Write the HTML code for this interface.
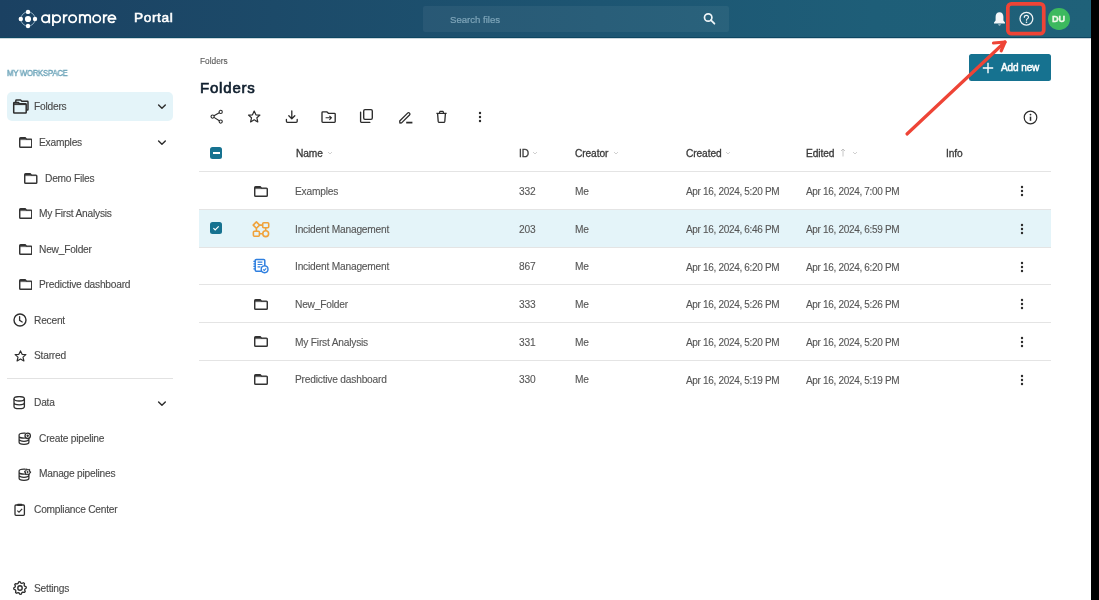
<!DOCTYPE html>
<html><head><meta charset="utf-8"><style>
html,body{margin:0;padding:0;width:1099px;height:600px;overflow:hidden;background:#fff;}
body{position:relative;font-family:"Liberation Sans", sans-serif;}
.t{position:absolute;white-space:nowrap;-webkit-font-smoothing:antialiased;will-change:transform;}
.r{position:absolute;display:block;}
</style></head><body>
<div class="r" style="left:0px;top:0px;width:1091px;height:37.5px;background:linear-gradient(90deg,#1b4162 0%,#1c4a69 25%,#1d5572 55%,#1e5e78 80%,#1f6179 100%);"></div>
<div class="r" style="left:0px;top:37px;width:1091px;height:1px;background:#0d4661;"></div>
<div class="r" style="left:0px;top:38px;width:1091px;height:1px;background:rgba(20,75,100,0.22);"></div>
<div class="r" style="left:423px;top:6px;width:306px;height:26px;background:rgba(255,255,255,0.055);border-radius:2px;"></div>
<div class="t" style="left:450px;top:15.17px;font-size:9.6px;line-height:9.6px;font-weight:400;color:#7ea5b9;letter-spacing:0px;-webkit-text-stroke:0.2px #7ea5b9;">Search files</div>
<svg class="r" style="left:702px;top:12px;" width="15" height="14" viewBox="0 0 15 14"><circle cx="6.2" cy="5.5" r="3.7" fill="none" stroke="#eef4f7" stroke-width="1.7"/><path d="M8.9 8.2 L12.4 11.7" stroke="#eef4f7" stroke-width="1.8" stroke-linecap="round"/></svg>
<svg class="r" style="left:17px;top:9px;" width="22" height="22" viewBox="0 0 22 22"><circle cx="11" cy="10" r="7.1" fill="none" stroke="#a9c6d8" stroke-width="0.8"/><circle cx="11" cy="10" r="3.1" fill="#fff"/><circle cx="11" cy="2.9" r="2.2" fill="#fff"/><circle cx="11" cy="17" r="2.2" fill="#fff"/><circle cx="3.8" cy="10" r="2.2" fill="#fff"/><circle cx="18" cy="10" r="2.2" fill="#fff"/></svg>
<svg class="r" style="left:38px;top:8px;" width="82" height="22" viewBox="0 0 82 22"><g fill="none" stroke="#fff" stroke-width="1.8"><circle cx="7.55" cy="10.7" r="3.65"/><path d="M11.25 6.3 L11.25 15.3"/><path d="M14.95 6.3 L14.95 18"/><circle cx="18.65" cy="10.7" r="3.65"/><path d="M25.75 6.3 L25.75 15.3 M25.75 10.6 C25.75 8.2 27.3 7.05 29.5 7.05"/><circle cx="34.6" cy="10.7" r="3.65"/><path d="M41.75 6.3 L41.75 15.3 M41.75 9.5 A2.625 2.625 0 0 1 47 9.5 L47 15.3 M47 9.5 A2.625 2.625 0 0 1 52.25 9.5 L52.25 15.3"/><circle cx="58.7" cy="10.7" r="3.65"/><path d="M65.75 6.3 L65.75 15.3 M65.75 10.6 C65.75 8.2 67.3 7.05 69.4 7.05"/><path d="M70.3 10.75 L77.5 10.75 A3.65 3.65 0 1 0 76.6 13.2"/></g></svg>
<div class="t" style="left:134.2px;top:11.30px;font-size:13.7px;line-height:13.7px;font-weight:400;color:#ffffff;letter-spacing:0.6px;-webkit-text-stroke:0.55px #ffffff;">Portal</div>
<svg class="r" style="left:993px;top:11px;" width="13" height="16" viewBox="0 0 13 16"><path d="M6.5 1.2 C4 1.2 2.6 3.3 2.6 5.8 L2.6 9.6 L1 11.6 L1 12.6 L12 12.6 L12 11.6 L10.4 9.6 L10.4 5.8 C10.4 3.3 9 1.2 6.5 1.2 Z" fill="#f4f7f9"/><path d="M5 13.4 Q6.5 15.6 8 13.4 Z" fill="#f4f7f9"/></svg>
<svg class="r" style="left:1018px;top:11px;" width="17" height="17" viewBox="0 0 17 17"><circle cx="8.4" cy="7.8" r="6.4" fill="none" stroke="#eef3f6" stroke-width="1.3"/><path d="M6.3 6.3 C6.3 4.9 7.3 4.3 8.4 4.3 C9.6 4.3 10.5 5 10.5 6.2 C10.5 7.6 8.5 7.7 8.5 9.2" fill="none" stroke="#eef3f6" stroke-width="1.2" stroke-linecap="round"/><circle cx="8.5" cy="11.2" r="0.8" fill="#eef3f6"/></svg>
<div class="r" style="left:1048px;top:8.1px;width:21.5px;height:21.5px;background:#3cb95e;border-radius:50%;"></div>
<div class="t" style="left:1051.6px;top:14.51px;font-size:9.2px;line-height:9.2px;font-weight:700;color:#eef8e8;letter-spacing:-0.25px;-webkit-text-stroke:0.3px #eef8e8;">DU</div>
<div class="t" style="left:7.3px;top:68.62px;font-size:8.6px;line-height:8.6px;font-weight:400;color:#6ea5ba;letter-spacing:-0.25px;transform:scaleX(0.9);transform-origin:0 0;-webkit-text-stroke:0.4px #6ea5ba;">MY WORKSPACE</div>
<div class="r" style="left:7px;top:91.5px;width:165.5px;height:29.3px;background:#e4f4f9;border-radius:5px;"></div>
<svg class="r" style="left:12px;top:98.5px;" width="18" height="15" viewBox="0 0 18 15"><path d="M3.8 3.2 L3.8 1.7 Q3.8 1 4.5 1 L8.6 1 L9.8 2.2 L15.3 2.2 Q16 2.2 16 2.9 L16 10.4 Q16 11 15.4 11 L14.4 11" fill="none" stroke="#2e2e2e" stroke-width="1.45" stroke-linejoin="round"/><path d="M1.7 4.3 Q1.7 3.6 2.4 3.6 L6.4 3.6 L7.6 4.8 L13.5 4.8 Q14.2 4.8 14.2 5.5 L14.2 13.4 Q14.2 14 13.6 14 L2.3 14 Q1.7 14 1.7 13.4 Z" fill="none" stroke="#2e2e2e" stroke-width="1.5" stroke-linejoin="round"/><path d="M1.7 3.6 L6.4 3.6 L7.6 4.8 L1.7 4.8Z" fill="#2e2e2e"/><path d="M1.7 5.6 L14.2 5.6" stroke="#2e2e2e" stroke-width="1"/></svg>
<div class="t" style="left:33.9px;top:102.37px;font-size:10.2px;line-height:10.2px;font-weight:400;color:#4a4a4a;letter-spacing:-0.22px;-webkit-text-stroke:0.12px #4a4a4a;">Folders</div>
<svg class="r" style="left:157px;top:103.3px;" width="10" height="7" viewBox="0 0 10 7"><path d="M1.6 1.9 L4.95 5.2 L8.3 1.9" fill="none" stroke="#2e2e2e" stroke-width="1.45" stroke-linecap="round" stroke-linejoin="round"/></svg>
<svg class="r" style="left:18.8px;top:137px;" width="13.5" height="11" viewBox="0 0 13.5 11"><path d="M0.725 1.625 Q0.725 0.725 1.625 0.725 L6.2 0.725 L7.5 2.125 L11.875 2.125 Q12.775 2.125 12.775 3.025 L12.775 9.375 Q12.775 10.275 11.875 10.275 L1.625 10.275 Q0.725 10.275 0.725 9.375 Z" fill="none" stroke="#333333" stroke-width="1.45" stroke-linejoin="round"/><path d="M0.725 0.725 L6.2 0.725 L7.5 2.125 L0.725 2.325Z" fill="#333333"/><path d="M0.725 2.625 L12.775 2.625" stroke="#333333" stroke-width="0.7"/></svg>
<div class="t" style="left:39.4px;top:138.47px;font-size:10.2px;line-height:10.2px;font-weight:400;color:#4a4a4a;letter-spacing:-0.22px;-webkit-text-stroke:0.12px #4a4a4a;">Examples</div>
<svg class="r" style="left:157px;top:139.3px;" width="10" height="7" viewBox="0 0 10 7"><path d="M1.6 1.9 L4.95 5.2 L8.3 1.9" fill="none" stroke="#2e2e2e" stroke-width="1.45" stroke-linecap="round" stroke-linejoin="round"/></svg>
<svg class="r" style="left:24.3px;top:172.5px;" width="13.5" height="11" viewBox="0 0 13.5 11"><path d="M0.725 1.625 Q0.725 0.725 1.625 0.725 L6.2 0.725 L7.5 2.125 L11.875 2.125 Q12.775 2.125 12.775 3.025 L12.775 9.375 Q12.775 10.275 11.875 10.275 L1.625 10.275 Q0.725 10.275 0.725 9.375 Z" fill="none" stroke="#333333" stroke-width="1.45" stroke-linejoin="round"/><path d="M0.725 0.725 L6.2 0.725 L7.5 2.125 L0.725 2.325Z" fill="#333333"/><path d="M0.725 2.625 L12.775 2.625" stroke="#333333" stroke-width="0.7"/></svg>
<div class="t" style="left:44.8px;top:173.77px;font-size:10.2px;line-height:10.2px;font-weight:400;color:#4a4a4a;letter-spacing:-0.22px;-webkit-text-stroke:0.12px #4a4a4a;">Demo Files</div>
<svg class="r" style="left:18.8px;top:208px;" width="13.5" height="11" viewBox="0 0 13.5 11"><path d="M0.725 1.625 Q0.725 0.725 1.625 0.725 L6.2 0.725 L7.5 2.125 L11.875 2.125 Q12.775 2.125 12.775 3.025 L12.775 9.375 Q12.775 10.275 11.875 10.275 L1.625 10.275 Q0.725 10.275 0.725 9.375 Z" fill="none" stroke="#333333" stroke-width="1.45" stroke-linejoin="round"/><path d="M0.725 0.725 L6.2 0.725 L7.5 2.125 L0.725 2.325Z" fill="#333333"/><path d="M0.725 2.625 L12.775 2.625" stroke="#333333" stroke-width="0.7"/></svg>
<div class="t" style="left:39.4px;top:209.17px;font-size:10.2px;line-height:10.2px;font-weight:400;color:#4a4a4a;letter-spacing:-0.22px;-webkit-text-stroke:0.12px #4a4a4a;">My First Analysis</div>
<svg class="r" style="left:18.8px;top:243.7px;" width="13.5" height="11" viewBox="0 0 13.5 11"><path d="M0.725 1.625 Q0.725 0.725 1.625 0.725 L6.2 0.725 L7.5 2.125 L11.875 2.125 Q12.775 2.125 12.775 3.025 L12.775 9.375 Q12.775 10.275 11.875 10.275 L1.625 10.275 Q0.725 10.275 0.725 9.375 Z" fill="none" stroke="#333333" stroke-width="1.45" stroke-linejoin="round"/><path d="M0.725 0.725 L6.2 0.725 L7.5 2.125 L0.725 2.325Z" fill="#333333"/><path d="M0.725 2.625 L12.775 2.625" stroke="#333333" stroke-width="0.7"/></svg>
<div class="t" style="left:39.4px;top:244.67px;font-size:10.2px;line-height:10.2px;font-weight:400;color:#4a4a4a;letter-spacing:-0.22px;-webkit-text-stroke:0.12px #4a4a4a;">New_Folder</div>
<svg class="r" style="left:18.8px;top:279.3px;" width="13.5" height="11" viewBox="0 0 13.5 11"><path d="M0.725 1.625 Q0.725 0.725 1.625 0.725 L6.2 0.725 L7.5 2.125 L11.875 2.125 Q12.775 2.125 12.775 3.025 L12.775 9.375 Q12.775 10.275 11.875 10.275 L1.625 10.275 Q0.725 10.275 0.725 9.375 Z" fill="none" stroke="#333333" stroke-width="1.45" stroke-linejoin="round"/><path d="M0.725 0.725 L6.2 0.725 L7.5 2.125 L0.725 2.325Z" fill="#333333"/><path d="M0.725 2.625 L12.775 2.625" stroke="#333333" stroke-width="0.7"/></svg>
<div class="t" style="left:39.4px;top:279.97px;font-size:10.2px;line-height:10.2px;font-weight:400;color:#4a4a4a;letter-spacing:-0.22px;-webkit-text-stroke:0.12px #4a4a4a;">Predictive dashboard</div>
<svg class="r" style="left:13px;top:313px;" width="14" height="14" viewBox="0 0 14 14"><circle cx="7" cy="7" r="6" fill="none" stroke="#2e2e2e" stroke-width="1.4"/><path d="M6.6 3.6 L6.6 7.3 L9.2 9" fill="none" stroke="#2e2e2e" stroke-width="1.3" stroke-linecap="round"/></svg>
<div class="t" style="left:33.9px;top:315.97px;font-size:10.2px;line-height:10.2px;font-weight:400;color:#4a4a4a;letter-spacing:-0.22px;-webkit-text-stroke:0.12px #4a4a4a;">Recent</div>
<svg class="r" style="left:13.5px;top:350px;" width="14" height="12" viewBox="0 0 14 12"><path d="M6.5 0.9 L8.1 4.3 L11.9 4.6 L9 7.1 L9.9 10.9 L6.5 8.9 L3.1 10.9 L4 7.1 L1.1 4.6 L4.9 4.3 Z" fill="none" stroke="#2e2e2e" stroke-width="1.2" stroke-linejoin="round"/></svg>
<div class="t" style="left:33.9px;top:351.37px;font-size:10.2px;line-height:10.2px;font-weight:400;color:#4a4a4a;letter-spacing:-0.22px;-webkit-text-stroke:0.12px #4a4a4a;">Starred</div>
<div class="r" style="left:7px;top:378px;width:166px;height:1px;background:#e2e2e2;"></div>
<svg class="r" style="left:12.5px;top:396px;" width="13" height="13.5" viewBox="0 0 13 13.5"><ellipse cx="6.2" cy="2.8" rx="5.2" ry="2.2" fill="none" stroke="#2e2e2e" stroke-width="1.3"/><path d="M1 2.8 L1 10.4 C1 11.8 3.3 12.7 6.2 12.7 C9.1 12.7 11.4 11.8 11.4 10.4 L11.4 2.8 M1 6.6 C1 8 3.3 8.9 6.2 8.9 C9.1 8.9 11.4 8 11.4 6.6" fill="none" stroke="#2e2e2e" stroke-width="1.3"/></svg>
<div class="t" style="left:33.9px;top:398.17px;font-size:10.2px;line-height:10.2px;font-weight:400;color:#4a4a4a;letter-spacing:-0.22px;-webkit-text-stroke:0.12px #4a4a4a;">Data</div>
<svg class="r" style="left:157px;top:399.5px;" width="10" height="7" viewBox="0 0 10 7"><path d="M1.6 1.9 L4.95 5.2 L8.3 1.9" fill="none" stroke="#2e2e2e" stroke-width="1.45" stroke-linecap="round" stroke-linejoin="round"/></svg>
<svg class="r" style="left:18.2px;top:432px;" width="14" height="13" viewBox="0 0 14 13"><path d="M7.2 1.1 C6.8 1.05 6.4 1 6 1 C3.1 1 1.1 1.8 1.1 3 L1.1 10.3 C1.1 11.5 3.1 12.3 6 12.3 C8.9 12.3 10.9 11.5 10.9 10.3 L10.9 6.6 M1.1 4.6 C1.6 5.6 3.4 6.1 6 6.1 C6.6 6.1 7 6.1 7.5 6 M1.1 7.6 C1.6 8.8 3.4 9.3 6 9.3 C8.6 9.3 10.4 8.8 10.9 7.6" fill="none" stroke="#2e2e2e" stroke-width="1.25" stroke-linecap="round"/><circle cx="9.7" cy="3.8" r="2.7" fill="#fff" stroke="#2e2e2e" stroke-width="1.3"/><path d="M9.7 2.5 L9.7 5.1 M8.4 3.8 L11 3.8" stroke="#2e2e2e" stroke-width="1.1"/></svg>
<div class="t" style="left:39.4px;top:434.17px;font-size:10.2px;line-height:10.2px;font-weight:400;color:#4a4a4a;letter-spacing:-0.22px;-webkit-text-stroke:0.12px #4a4a4a;">Create pipeline</div>
<svg class="r" style="left:18.2px;top:467.5px;" width="14" height="13" viewBox="0 0 14 13"><path d="M7.2 1.1 C6.8 1.05 6.4 1 6 1 C3.1 1 1.1 1.8 1.1 3 L1.1 10.3 C1.1 11.5 3.1 12.3 6 12.3 C8.9 12.3 10.9 11.5 10.9 10.3 L10.9 6.6 M1.1 4.6 C1.6 5.6 3.4 6.1 6 6.1 C6.6 6.1 7 6.1 7.5 6 M1.1 7.6 C1.6 8.8 3.4 9.3 6 9.3 C8.6 9.3 10.4 8.8 10.9 7.6" fill="none" stroke="#2e2e2e" stroke-width="1.25" stroke-linecap="round"/><path d="M12.60 4.00 L12.50 4.78 L11.51 5.10 L11.16 5.56 L11.10 6.60 L10.38 6.90 L9.60 6.20 L9.03 6.13 L8.10 6.60 L7.48 6.12 L7.69 5.10 L7.47 4.57 L6.60 4.00 L6.70 3.22 L7.69 2.90 L8.04 2.44 L8.10 1.40 L8.82 1.10 L9.60 1.80 L10.17 1.87 L11.10 1.40 L11.72 1.88 L11.51 2.90 L11.73 3.43Z" fill="#fff" stroke="#2e2e2e" stroke-width="1.1" stroke-linejoin="round"/><circle cx="9.6" cy="4" r="0.9" fill="#2e2e2e"/></svg>
<div class="t" style="left:39.4px;top:469.27px;font-size:10.2px;line-height:10.2px;font-weight:400;color:#4a4a4a;letter-spacing:-0.22px;-webkit-text-stroke:0.12px #4a4a4a;">Manage pipelines</div>
<svg class="r" style="left:14px;top:503px;" width="11.5" height="13" viewBox="0 0 11.5 13"><rect x="1" y="2" width="9.4" height="10.3" rx="1" fill="none" stroke="#2e2e2e" stroke-width="1.3"/><rect x="3.3" y="0.7" width="4.8" height="2.4" rx="0.5" fill="#2e2e2e"/><path d="M3.3 7.6 L5 9.2 L8.2 5.8" fill="none" stroke="#2e2e2e" stroke-width="1.1"/></svg>
<div class="t" style="left:33.9px;top:504.67px;font-size:10.2px;line-height:10.2px;font-weight:400;color:#4a4a4a;letter-spacing:-0.22px;-webkit-text-stroke:0.12px #4a4a4a;">Compliance Center</div>
<svg class="r" style="left:13px;top:581.3px;" width="14" height="14" viewBox="0 0 14 14"><path d="M13.17 5.75 L13.30 6.98 L11.91 7.96 L11.63 8.90 L12.25 10.48 L11.47 11.44 L9.79 11.15 L8.93 11.61 L8.25 13.17 L7.02 13.30 L6.04 11.91 L5.10 11.63 L3.52 12.25 L2.56 11.47 L2.85 9.79 L2.39 8.93 L0.83 8.25 L0.70 7.02 L2.09 6.04 L2.37 5.10 L1.75 3.52 L2.53 2.56 L4.21 2.85 L5.07 2.39 L5.75 0.83 L6.98 0.70 L7.96 2.09 L8.90 2.37 L10.48 1.75 L11.44 2.53 L11.15 4.21 L11.61 5.07Z" fill="none" stroke="#2e2e2e" stroke-width="1.3" stroke-linejoin="round"/><circle cx="7" cy="7" r="2.2" fill="none" stroke="#2e2e2e" stroke-width="1.4"/></svg>
<div class="t" style="left:33.9px;top:583.97px;font-size:10.2px;line-height:10.2px;font-weight:400;color:#4a4a4a;letter-spacing:-0.22px;-webkit-text-stroke:0.12px #4a4a4a;">Settings</div>
<div class="t" style="left:199.8px;top:56.97px;font-size:8.3px;line-height:8.3px;font-weight:400;color:#5a5a5a;letter-spacing:0px;-webkit-text-stroke:0.12px #5a5a5a;">Folders</div>
<div class="t" style="left:200.2px;top:80.00px;font-size:15.0px;line-height:15.0px;font-weight:400;color:#0f1e2d;letter-spacing:0.8px;-webkit-text-stroke:0.65px #0f1e2d;">Folders</div>
<svg class="r" style="left:210px;top:109px;" width="14" height="15" viewBox="0 0 14 15"><circle cx="2.6" cy="7.6" r="1.6" fill="none" stroke="#2b2b2b" stroke-width="1.1"/><circle cx="10.7" cy="2.9" r="1.6" fill="none" stroke="#2b2b2b" stroke-width="1.1"/><circle cx="10.7" cy="12.6" r="1.6" fill="none" stroke="#2b2b2b" stroke-width="1.1"/><path d="M4 6.8 L9.3 3.7 M4 8.4 L9.3 11.8" stroke="#2b2b2b" stroke-width="1.1"/></svg>
<svg class="r" style="left:247px;top:110px;" width="14" height="13.5" viewBox="0 0 14 13.5"><path d="M7.2 1 L8.9 4.8 L12.9 5.1 L9.9 7.8 L10.8 11.9 L7.2 9.8 L3.6 11.9 L4.5 7.8 L1.5 5.1 L5.5 4.8 Z" fill="none" stroke="#2b2b2b" stroke-width="1.2" stroke-linejoin="round"/></svg>
<svg class="r" style="left:285px;top:110px;" width="14" height="14" viewBox="0 0 14 14"><path d="M6.8 1 L6.8 8.6 M3.8 5.8 L6.8 8.8 L9.8 5.8" fill="none" stroke="#2b2b2b" stroke-width="1.3" stroke-linecap="round" stroke-linejoin="round"/><path d="M1.4 9.5 L1.4 11.2 C1.4 11.9 1.8 12.3 2.5 12.3 L11.1 12.3 C11.8 12.3 12.2 11.9 12.2 11.2 L12.2 9.5" fill="none" stroke="#2b2b2b" stroke-width="1.3" stroke-linecap="round"/></svg>
<svg class="r" style="left:321px;top:110px;" width="16" height="14" viewBox="0 0 16 14"><path d="M1.8 1.9 L6 1.9 L7.4 3.3 L13.4 3.3 C14 3.3 14.2 3.6 14.2 4.1 L14.2 11.6 C14.2 12.1 14 12.4 13.4 12.4 L1.8 12.4 C1.2 12.4 1 12.1 1 11.6 L1 2.7 C1 2.2 1.2 1.9 1.8 1.9Z" fill="none" stroke="#2b2b2b" stroke-width="1.35" stroke-linejoin="round"/><path d="M4.6 7.8 L10.4 7.8 M8.4 5.8 L10.4 7.8 L8.4 9.8" fill="none" stroke="#2b2b2b" stroke-width="1.1"/></svg>
<svg class="r" style="left:359px;top:108px;" width="15" height="16" viewBox="0 0 15 16"><rect x="4.7" y="1.6" width="8.6" height="9.8" rx="1.3" fill="none" stroke="#2b2b2b" stroke-width="1.35"/><path d="M1.6 4.2 L1.6 13.6 C1.6 14.1 1.9 14.4 2.4 14.4 L10.8 14.4" fill="none" stroke="#2b2b2b" stroke-width="1.35" stroke-linecap="round"/></svg>
<svg class="r" style="left:398px;top:111px;" width="16" height="14" viewBox="0 0 16 14"><path d="M1.9 12 L1.7 10 L9.6 2.1 C10.2 1.5 10.9 1.5 11.5 2.1 C12.1 2.7 12.1 3.4 11.5 4 L3.6 11.9 Z" fill="none" stroke="#2b2b2b" stroke-width="1.3" stroke-linejoin="round"/><path d="M8.2 11.6 L14.4 11.6" stroke="#2b2b2b" stroke-width="1.75"/></svg>
<svg class="r" style="left:435px;top:110px;" width="13" height="14" viewBox="0 0 13 14"><path d="M1.4 3.3 L11.6 3.3 M4.4 3.1 L4.9 1.4 L8.1 1.4 L8.6 3.1" fill="none" stroke="#2b2b2b" stroke-width="1.2" stroke-linejoin="round"/><path d="M2.6 3.6 L3.2 11.4 C3.3 12.1 3.7 12.4 4.3 12.4 L8.7 12.4 C9.3 12.4 9.7 12.1 9.8 11.4 L10.4 3.6" fill="none" stroke="#2b2b2b" stroke-width="1.3"/></svg>
<svg class="r" style="left:476.5px;top:111px;" width="6" height="13" viewBox="0 0 6 13"><circle cx="3" cy="2.00" r="1.2" fill="#2b2b2b"/><circle cx="3" cy="6.00" r="1.2" fill="#2b2b2b"/><circle cx="3" cy="10.00" r="1.2" fill="#2b2b2b"/></svg>
<svg class="r" style="left:1023px;top:109.5px;" width="15" height="15" viewBox="0 0 15 15"><circle cx="7.5" cy="7.5" r="6.3" fill="none" stroke="#2b2b2b" stroke-width="1.2"/><circle cx="7.5" cy="4.6" r="0.9" fill="#2b2b2b"/><path d="M7.5 6.6 L7.5 10.8" stroke="#2b2b2b" stroke-width="1.5"/></svg>
<div class="r" style="left:969px;top:54.3px;width:82px;height:26.8px;background:#167290;border-radius:2.5px;"></div>
<svg class="r" style="left:981.5px;top:62px;" width="12" height="12" viewBox="0 0 12 12"><path d="M6 0.8 L6 11.2 M0.8 6 L11.2 6" stroke="#fff" stroke-width="1.4"/></svg>
<div class="t" style="left:1001.2px;top:63.33px;font-size:10.0px;line-height:10.0px;font-weight:400;color:#ffffff;letter-spacing:-0.1px;-webkit-text-stroke:0.45px #ffffff;">Add new</div>
<div class="r" style="left:210px;top:147px;width:12px;height:12px;background:#167290;border-radius:2.5px;"></div>
<div class="r" style="left:212.5px;top:152.1px;width:7.2px;height:1.8px;background:#ffffff;"></div>
<div class="t" style="left:295.5px;top:149.07px;font-size:10.2px;line-height:10.2px;font-weight:400;color:#3a3a3a;letter-spacing:-0.1px;-webkit-text-stroke:0.3px #3a3a3a;">Name</div>
<svg class="r" style="left:326.5px;top:151px;" width="6" height="4" viewBox="0 0 6 4"><path d="M1 1 L3 3 L5 1" fill="none" stroke="#c4c4c4" stroke-width="0.8"/></svg>
<div class="t" style="left:518.6px;top:149.07px;font-size:10.2px;line-height:10.2px;font-weight:400;color:#3a3a3a;letter-spacing:-0.1px;-webkit-text-stroke:0.3px #3a3a3a;">ID</div>
<svg class="r" style="left:531.5px;top:151px;" width="6" height="4" viewBox="0 0 6 4"><path d="M1 1 L3 3 L5 1" fill="none" stroke="#c4c4c4" stroke-width="0.8"/></svg>
<div class="t" style="left:574.5px;top:149.07px;font-size:10.2px;line-height:10.2px;font-weight:400;color:#3a3a3a;letter-spacing:-0.1px;-webkit-text-stroke:0.3px #3a3a3a;">Creator</div>
<svg class="r" style="left:612.5px;top:151px;" width="6" height="4" viewBox="0 0 6 4"><path d="M1 1 L3 3 L5 1" fill="none" stroke="#c4c4c4" stroke-width="0.8"/></svg>
<div class="t" style="left:685.8px;top:149.07px;font-size:10.2px;line-height:10.2px;font-weight:400;color:#3a3a3a;letter-spacing:-0.1px;-webkit-text-stroke:0.3px #3a3a3a;">Created</div>
<svg class="r" style="left:724.5px;top:151px;" width="6" height="4" viewBox="0 0 6 4"><path d="M1 1 L3 3 L5 1" fill="none" stroke="#c4c4c4" stroke-width="0.8"/></svg>
<div class="t" style="left:806.4px;top:149.07px;font-size:10.2px;line-height:10.2px;font-weight:400;color:#3a3a3a;letter-spacing:-0.1px;-webkit-text-stroke:0.3px #3a3a3a;">Edited</div>
<svg class="r" style="left:840px;top:147.5px;" width="6" height="9" viewBox="0 0 6 9"><path d="M3 8.5 L3 1 M1 3 L3 1 L5 3" fill="none" stroke="#b8b8b8" stroke-width="0.8"/></svg>
<svg class="r" style="left:851.5px;top:151px;" width="6" height="4" viewBox="0 0 6 4"><path d="M1 1 L3 3 L5 1" fill="none" stroke="#c4c4c4" stroke-width="0.8"/></svg>
<div class="t" style="left:946px;top:149.07px;font-size:10.2px;line-height:10.2px;font-weight:400;color:#3a3a3a;letter-spacing:-0.1px;-webkit-text-stroke:0.3px #3a3a3a;">Info</div>
<div class="r" style="left:199px;top:209.3px;width:852px;height:37.8px;background:#e4f4f9;"></div>
<div class="r" style="left:199px;top:171.2px;width:852px;height:1px;background:#e4e4e4;"></div>
<div class="r" style="left:199px;top:209.0px;width:852px;height:1px;background:#e4e4e4;"></div>
<div class="r" style="left:199px;top:246.8px;width:852px;height:1px;background:#e4e4e4;"></div>
<div class="r" style="left:199px;top:284.4px;width:852px;height:1px;background:#e4e4e4;"></div>
<div class="r" style="left:199px;top:322.0px;width:852px;height:1px;background:#e4e4e4;"></div>
<div class="r" style="left:199px;top:359.7px;width:852px;height:1px;background:#e4e4e4;"></div>
<svg class="r" style="left:254px;top:185.6px;" width="14" height="11" viewBox="0 0 14 11"><path d="M0.725 1.625 Q0.725 0.725 1.625 0.725 L6.2 0.725 L7.5 2.125 L12.375 2.125 Q13.275 2.125 13.275 3.025 L13.275 9.375 Q13.275 10.275 12.375 10.275 L1.625 10.275 Q0.725 10.275 0.725 9.375 Z" fill="none" stroke="#333333" stroke-width="1.45" stroke-linejoin="round"/><path d="M0.725 0.725 L6.2 0.725 L7.5 2.125 L0.725 2.325Z" fill="#333333"/><path d="M0.725 2.625 L13.275 2.625" stroke="#333333" stroke-width="0.7"/></svg>
<div class="t" style="left:294.9px;top:186.87px;font-size:10.2px;line-height:10.2px;font-weight:400;color:#575757;letter-spacing:-0.2px;-webkit-text-stroke:0.12px #575757;">Examples</div>
<div class="t" style="left:518.6px;top:186.87px;font-size:10.2px;line-height:10.2px;font-weight:400;color:#575757;letter-spacing:-0.2px;-webkit-text-stroke:0.12px #575757;">332</div>
<div class="t" style="left:574.5px;top:186.87px;font-size:10.2px;line-height:10.2px;font-weight:400;color:#575757;letter-spacing:-0.2px;-webkit-text-stroke:0.12px #575757;">Me</div>
<div class="t" style="left:685.8px;top:187.03px;font-size:10.0px;line-height:10.0px;font-weight:400;color:#575757;letter-spacing:-0.32px;-webkit-text-stroke:0.12px #575757;">Apr 16, 2024, 5:20 PM</div>
<div class="t" style="left:806.4px;top:187.03px;font-size:10.0px;line-height:10.0px;font-weight:400;color:#575757;letter-spacing:-0.32px;-webkit-text-stroke:0.12px #575757;">Apr 16, 2024, 7:00 PM</div>
<svg class="r" style="left:1019.3px;top:185.0px;" width="6" height="13" viewBox="0 0 6 13"><circle cx="3" cy="2.00" r="1.2" fill="#2b2b2b"/><circle cx="3" cy="6.00" r="1.2" fill="#2b2b2b"/><circle cx="3" cy="10.00" r="1.2" fill="#2b2b2b"/></svg>
<svg class="r" style="left:252px;top:221.1px;" width="18" height="18" viewBox="0 0 18 18"><path d="M4.4 0.9 L7.6 4.1 L4.4 7.3 L1.2 4.1 Z" fill="none" stroke="#f0a23b" stroke-width="1.6" stroke-linejoin="round"/><rect x="10.7" y="1.7" width="6" height="5" rx="1" fill="none" stroke="#f0a23b" stroke-width="1.6"/><rect x="1.4" y="10.2" width="6" height="5" rx="1" fill="none" stroke="#f0a23b" stroke-width="1.6"/><circle cx="13.7" cy="12.7" r="2.9" fill="none" stroke="#f0a23b" stroke-width="1.6"/><path d="M7.6 4.1 L10.7 4.1 M4.4 7.3 L4.4 10.2 M13.7 6.7 L13.7 9.8 M7.4 12.7 L10.8 12.7" stroke="#f0a23b" stroke-width="1.6"/></svg>
<div class="r" style="left:210px;top:221.9px;width:12px;height:12px;background:#167290;border-radius:2.5px;"></div>
<svg class="r" style="left:210px;top:221.9px;" width="12" height="12" viewBox="0 0 12 12"><path d="M3.4 6.2 L5.2 8 L8.7 4.4" fill="none" stroke="#fff" stroke-width="1.2"/></svg>
<div class="t" style="left:294.9px;top:224.67px;font-size:10.2px;line-height:10.2px;font-weight:400;color:#575757;letter-spacing:-0.2px;-webkit-text-stroke:0.12px #575757;">Incident Management</div>
<div class="t" style="left:518.6px;top:224.67px;font-size:10.2px;line-height:10.2px;font-weight:400;color:#575757;letter-spacing:-0.2px;-webkit-text-stroke:0.12px #575757;">203</div>
<div class="t" style="left:574.5px;top:224.67px;font-size:10.2px;line-height:10.2px;font-weight:400;color:#575757;letter-spacing:-0.2px;-webkit-text-stroke:0.12px #575757;">Me</div>
<div class="t" style="left:685.8px;top:224.84px;font-size:10.0px;line-height:10.0px;font-weight:400;color:#575757;letter-spacing:-0.32px;-webkit-text-stroke:0.12px #575757;">Apr 16, 2024, 6:46 PM</div>
<div class="t" style="left:806.4px;top:224.84px;font-size:10.0px;line-height:10.0px;font-weight:400;color:#575757;letter-spacing:-0.32px;-webkit-text-stroke:0.12px #575757;">Apr 16, 2024, 6:59 PM</div>
<svg class="r" style="left:1019.3px;top:222.8px;" width="6" height="13" viewBox="0 0 6 13"><circle cx="3" cy="2.00" r="1.2" fill="#2b2b2b"/><circle cx="3" cy="6.00" r="1.2" fill="#2b2b2b"/><circle cx="3" cy="10.00" r="1.2" fill="#2b2b2b"/></svg>
<svg class="r" style="left:252px;top:257.09999999999997px;" width="18" height="18" viewBox="0 0 18 18"><rect x="3.2" y="2.4" width="9.6" height="11.8" rx="1.1" fill="none" stroke="#2f7fdf" stroke-width="1.5"/><path d="M1.4 4.4 L3.4 4.4 M1.4 6.9 L3.4 6.9 M1.4 9.4 L3.4 9.4 M1.4 11.9 L3.4 11.9" stroke="#2f7fdf" stroke-width="1.1"/><path d="M5.6 5.2 L10.4 5.2 M5.6 7.5 L10.4 7.5 M5.6 9.8 L8.4 9.8" stroke="#2f7fdf" stroke-width="1.2"/><circle cx="12.6" cy="12.3" r="3.4" fill="#fff" stroke="#2f7fdf" stroke-width="1.4"/><path d="M11.1 12.3 L12.3 13.4 L14.2 11.3" fill="none" stroke="#2f7fdf" stroke-width="1.05"/></svg>
<div class="t" style="left:294.9px;top:262.47px;font-size:10.2px;line-height:10.2px;font-weight:400;color:#575757;letter-spacing:-0.2px;-webkit-text-stroke:0.12px #575757;">Incident Management</div>
<div class="t" style="left:518.6px;top:262.47px;font-size:10.2px;line-height:10.2px;font-weight:400;color:#575757;letter-spacing:-0.2px;-webkit-text-stroke:0.12px #575757;">867</div>
<div class="t" style="left:574.5px;top:262.47px;font-size:10.2px;line-height:10.2px;font-weight:400;color:#575757;letter-spacing:-0.2px;-webkit-text-stroke:0.12px #575757;">Me</div>
<div class="t" style="left:685.8px;top:262.63px;font-size:10.0px;line-height:10.0px;font-weight:400;color:#575757;letter-spacing:-0.32px;-webkit-text-stroke:0.12px #575757;">Apr 16, 2024, 6:20 PM</div>
<div class="t" style="left:806.4px;top:262.63px;font-size:10.0px;line-height:10.0px;font-weight:400;color:#575757;letter-spacing:-0.32px;-webkit-text-stroke:0.12px #575757;">Apr 16, 2024, 6:20 PM</div>
<svg class="r" style="left:1019.3px;top:260.59999999999997px;" width="6" height="13" viewBox="0 0 6 13"><circle cx="3" cy="2.00" r="1.2" fill="#2b2b2b"/><circle cx="3" cy="6.00" r="1.2" fill="#2b2b2b"/><circle cx="3" cy="10.00" r="1.2" fill="#2b2b2b"/></svg>
<svg class="r" style="left:254px;top:298.79999999999995px;" width="14" height="11" viewBox="0 0 14 11"><path d="M0.725 1.625 Q0.725 0.725 1.625 0.725 L6.2 0.725 L7.5 2.125 L12.375 2.125 Q13.275 2.125 13.275 3.025 L13.275 9.375 Q13.275 10.275 12.375 10.275 L1.625 10.275 Q0.725 10.275 0.725 9.375 Z" fill="none" stroke="#333333" stroke-width="1.45" stroke-linejoin="round"/><path d="M0.725 0.725 L6.2 0.725 L7.5 2.125 L0.725 2.325Z" fill="#333333"/><path d="M0.725 2.625 L13.275 2.625" stroke="#333333" stroke-width="0.7"/></svg>
<div class="t" style="left:294.9px;top:300.07px;font-size:10.2px;line-height:10.2px;font-weight:400;color:#575757;letter-spacing:-0.2px;-webkit-text-stroke:0.12px #575757;">New_Folder</div>
<div class="t" style="left:518.6px;top:300.07px;font-size:10.2px;line-height:10.2px;font-weight:400;color:#575757;letter-spacing:-0.2px;-webkit-text-stroke:0.12px #575757;">333</div>
<div class="t" style="left:574.5px;top:300.07px;font-size:10.2px;line-height:10.2px;font-weight:400;color:#575757;letter-spacing:-0.2px;-webkit-text-stroke:0.12px #575757;">Me</div>
<div class="t" style="left:685.8px;top:300.23px;font-size:10.0px;line-height:10.0px;font-weight:400;color:#575757;letter-spacing:-0.32px;-webkit-text-stroke:0.12px #575757;">Apr 16, 2024, 5:26 PM</div>
<div class="t" style="left:806.4px;top:300.23px;font-size:10.0px;line-height:10.0px;font-weight:400;color:#575757;letter-spacing:-0.32px;-webkit-text-stroke:0.12px #575757;">Apr 16, 2024, 5:26 PM</div>
<svg class="r" style="left:1019.3px;top:298.19999999999993px;" width="6" height="13" viewBox="0 0 6 13"><circle cx="3" cy="2.00" r="1.2" fill="#2b2b2b"/><circle cx="3" cy="6.00" r="1.2" fill="#2b2b2b"/><circle cx="3" cy="10.00" r="1.2" fill="#2b2b2b"/></svg>
<svg class="r" style="left:254px;top:336.4px;" width="14" height="11" viewBox="0 0 14 11"><path d="M0.725 1.625 Q0.725 0.725 1.625 0.725 L6.2 0.725 L7.5 2.125 L12.375 2.125 Q13.275 2.125 13.275 3.025 L13.275 9.375 Q13.275 10.275 12.375 10.275 L1.625 10.275 Q0.725 10.275 0.725 9.375 Z" fill="none" stroke="#333333" stroke-width="1.45" stroke-linejoin="round"/><path d="M0.725 0.725 L6.2 0.725 L7.5 2.125 L0.725 2.325Z" fill="#333333"/><path d="M0.725 2.625 L13.275 2.625" stroke="#333333" stroke-width="0.7"/></svg>
<div class="t" style="left:294.9px;top:337.67px;font-size:10.2px;line-height:10.2px;font-weight:400;color:#575757;letter-spacing:-0.2px;-webkit-text-stroke:0.12px #575757;">My First Analysis</div>
<div class="t" style="left:518.6px;top:337.67px;font-size:10.2px;line-height:10.2px;font-weight:400;color:#575757;letter-spacing:-0.2px;-webkit-text-stroke:0.12px #575757;">331</div>
<div class="t" style="left:574.5px;top:337.67px;font-size:10.2px;line-height:10.2px;font-weight:400;color:#575757;letter-spacing:-0.2px;-webkit-text-stroke:0.12px #575757;">Me</div>
<div class="t" style="left:685.8px;top:337.83px;font-size:10.0px;line-height:10.0px;font-weight:400;color:#575757;letter-spacing:-0.32px;-webkit-text-stroke:0.12px #575757;">Apr 16, 2024, 5:20 PM</div>
<div class="t" style="left:806.4px;top:337.83px;font-size:10.0px;line-height:10.0px;font-weight:400;color:#575757;letter-spacing:-0.32px;-webkit-text-stroke:0.12px #575757;">Apr 16, 2024, 5:20 PM</div>
<svg class="r" style="left:1019.3px;top:335.79999999999995px;" width="6" height="13" viewBox="0 0 6 13"><circle cx="3" cy="2.00" r="1.2" fill="#2b2b2b"/><circle cx="3" cy="6.00" r="1.2" fill="#2b2b2b"/><circle cx="3" cy="10.00" r="1.2" fill="#2b2b2b"/></svg>
<svg class="r" style="left:254px;top:374.09999999999997px;" width="14" height="11" viewBox="0 0 14 11"><path d="M0.725 1.625 Q0.725 0.725 1.625 0.725 L6.2 0.725 L7.5 2.125 L12.375 2.125 Q13.275 2.125 13.275 3.025 L13.275 9.375 Q13.275 10.275 12.375 10.275 L1.625 10.275 Q0.725 10.275 0.725 9.375 Z" fill="none" stroke="#333333" stroke-width="1.45" stroke-linejoin="round"/><path d="M0.725 0.725 L6.2 0.725 L7.5 2.125 L0.725 2.325Z" fill="#333333"/><path d="M0.725 2.625 L13.275 2.625" stroke="#333333" stroke-width="0.7"/></svg>
<div class="t" style="left:294.9px;top:375.37px;font-size:10.2px;line-height:10.2px;font-weight:400;color:#575757;letter-spacing:-0.2px;-webkit-text-stroke:0.12px #575757;">Predictive dashboard</div>
<div class="t" style="left:518.6px;top:375.37px;font-size:10.2px;line-height:10.2px;font-weight:400;color:#575757;letter-spacing:-0.2px;-webkit-text-stroke:0.12px #575757;">330</div>
<div class="t" style="left:574.5px;top:375.37px;font-size:10.2px;line-height:10.2px;font-weight:400;color:#575757;letter-spacing:-0.2px;-webkit-text-stroke:0.12px #575757;">Me</div>
<div class="t" style="left:685.8px;top:375.53px;font-size:10.0px;line-height:10.0px;font-weight:400;color:#575757;letter-spacing:-0.32px;-webkit-text-stroke:0.12px #575757;">Apr 16, 2024, 5:19 PM</div>
<div class="t" style="left:806.4px;top:375.53px;font-size:10.0px;line-height:10.0px;font-weight:400;color:#575757;letter-spacing:-0.32px;-webkit-text-stroke:0.12px #575757;">Apr 16, 2024, 5:19 PM</div>
<svg class="r" style="left:1019.3px;top:373.49999999999994px;" width="6" height="13" viewBox="0 0 6 13"><circle cx="3" cy="2.00" r="1.2" fill="#2b2b2b"/><circle cx="3" cy="6.00" r="1.2" fill="#2b2b2b"/><circle cx="3" cy="10.00" r="1.2" fill="#2b2b2b"/></svg>
<svg class="r" style="left:1005px;top:1px;" width="42" height="36" viewBox="0 0 42 36"><rect x="2.85" y="2.9" width="35.9" height="29.8" rx="3.5" fill="none" stroke="#ee4436" stroke-width="3.7"/></svg>
<svg class="r" style="left:890px;top:30px;" width="130" height="115" viewBox="0 0 130 115"><path d="M17 104 L115 12" stroke="#ee4436" stroke-width="3.2" stroke-linecap="round"/><path d="M103.5 13 L115 12 L111.2 20.8" fill="none" stroke="#ee4436" stroke-width="3.2" stroke-linecap="round" stroke-linejoin="round"/></svg>
<div class="r" style="left:1091px;top:0px;width:8px;height:600px;background:#000;"></div>
</body></html>
